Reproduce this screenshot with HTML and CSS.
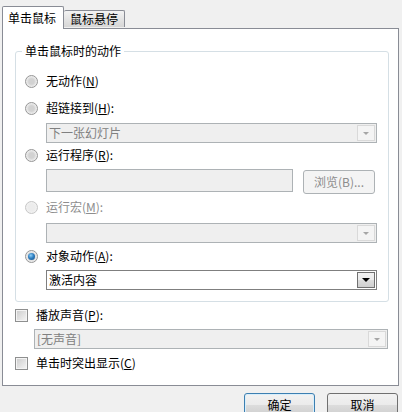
FILE: index.html
```html
<!DOCTYPE html>
<html lang="zh-CN">
<head>
<meta charset="utf-8">
<title>动作设置</title>
<link rel="stylesheet" href="styles.css">
</head>
<body>
<div class="dialog">
  <div class="tabs">
    <div class="tab tab-active">单击鼠标</div>
    <div class="tab">鼠标悬停</div>
  </div>
  <div class="panel">
    <div class="group">
      <div class="group-title"><span>单击鼠标时的动作</span></div>
      <div class="row row-1"><span class="radio"></span><span class="label">无动作(<u>N</u>)</span></div>
      <div class="row row-2"><span class="radio"></span><span class="label">超链接到(<u>H</u>):</span></div>
      <div class="combo combo-disabled combo-1"><span class="combo-text">下一张幻灯片</span><span class="combo-btn"><span class="arrow"></span></span></div>
      <div class="row row-3"><span class="radio"></span><span class="label">运行程序(<u>R</u>):</span></div>
      <div class="input-row">
        <div class="text-input"></div>
        <div class="browse">浏览(B)...</div>
      </div>
      <div class="row row-4 disabled"><span class="radio radio-disabled"></span><span class="label">运行宏(<u>M</u>):</span></div>
      <div class="combo combo-disabled combo-2"><span class="combo-text"></span><span class="combo-btn"><span class="arrow"></span></span></div>
      <div class="row row-5"><span class="radio radio-checked"></span><span class="label">对象动作(<u>A</u>):</span></div>
      <div class="combo combo-enabled combo-3"><span class="combo-text">激活内容</span><span class="combo-btn"><span class="arrow"></span></span></div>
    </div>
    <div class="row check-row-1"><span class="check"></span><span class="label">播放声音(<u>P</u>):</span></div>
    <div class="combo combo-disabled combo-sound"><span class="combo-text">[无声音]</span><span class="combo-btn"><span class="arrow"></span></span></div>
    <div class="row check-row-2"><span class="check"></span><span class="label">单击时突出显示(<u>C</u>)</span></div>
  </div>
  <div class="buttons">
    <div class="btn btn-default">确定</div>
    <div class="btn">取消</div>
  </div>
</div>
</body>
</html>
```

FILE: styles.css
```css
* { box-sizing: border-box; }
html, body { margin: 0; padding: 0; }
body {
  background: #f0f0f0;
  font-family: "Noto Sans CJK SC", "Noto Sans", sans-serif;
  font-size: 12px;
  color: #000;
  width: 402px;
  height: 412px;
  overflow: hidden;
}
u { text-decoration: underline; text-underline-offset: 1px; }

.tabs {
  display: flex;
  align-items: flex-end;
  padding: 5px 0 0 2px;
  height: 28px;
}
.tab {
  height: 16px;
  margin-bottom: 1px;
  padding: 0 6px;
  line-height: 15px;
  border: 1px solid #898c95;
  border-bottom: none;
  border-left: none;
  border-radius: 2px 2px 0 0;
  background: linear-gradient(#f3f3f3, #e4e4e4 50%, #d6d6d6);
  width: 61px;
  height: 17px;
}
.tab-active {
  height: 23px;
  margin-bottom: -1px;
  width: 62px;
  border-left: 1px solid #898c95;
  background: #fff;
  line-height: 22px;
  padding: 0 5px;
  position: relative;
  z-index: 2;
}

.panel {
  margin: 0 3px 0 2px;
  height: 358px;
  border: 1px solid #898c95;
  background: #fff;
  padding: 0 0 0 12px;
  display: flex;
  flex-direction: column;
}

.group {
  margin-top: 22px;
  width: 374px;
  height: 251px;
  border: 1px solid #d5dfe5;
  border-radius: 3px;
  padding: 0 0 0 9px;
  display: flex;
  flex-direction: column;
}
.group-title {
  margin: -9px 0 0 -3px;
  height: 16px;
  line-height: 16px;
}
.group-title span {
  background: #fff;
  padding: 0 3px 0 3px;
}

.row {
  display: flex;
  align-items: center;
  height: 20px;
}
.label { line-height: 20px; }
.disabled .label { color: #8d8d8d; }

.radio {
  width: 13px;
  height: 13px;
  border-radius: 50%;
  border: 1px solid #969696;
  background: radial-gradient(circle at 50% 50%, #d2d2d2 0 35%, #e8e8e8 60%, #fbfbfb 100%);
  margin-right: 8px;
  flex: none;
  position: relative;
}
.radio-disabled {
  border-color: #c6c6c6;
  background: radial-gradient(circle, #ececec 0 40%, #f6f6f6 100%);
}
.radio-checked::after {
  content: "";
  position: absolute;
  left: 2px;
  top: 2px;
  width: 7px;
  height: 7px;
  border-radius: 50%;
  background: radial-gradient(circle at 40% 35%, #8fd0f8 0, #2f7fc1 45%, #184f86 100%);
}

.row-1 { margin-top: 12px; }
.row-2 { margin-top: 7px; }
.combo-1 { margin-top: 5px; }
.row-3 { margin-top: 2px; }
.input-row { margin-top: 4px; display: flex; margin-left: 21px; }
.row-4 { margin-top: 3px; }
.combo-2 { margin-top: 6px; }
.row-5 { margin-top: 3px; }
.combo-3 { margin-top: 4px; }

.combo {
  width: 331px;
  height: 20px;
  margin-left: 21px;
  border: 1px solid #abadb3;
  display: flex;
  align-items: stretch;
  flex: none;
}
.combo-text {
  flex: 1;
  padding-left: 2px;
  line-height: 18px;
}
.combo-disabled {
  background: #efefef;
  border-color: #adb2b5;
}
.combo-disabled .combo-text { color: #808080; }
.combo-enabled {
  background: #fff;
  border-color: #7f7f7f;
}
.combo-btn {
  width: 19px;
  display: flex;
  align-items: center;
  justify-content: center;
  border-left: 1px solid #d0d0d0;
  background: #f4f4f4;
}
.combo-disabled .combo-btn {
  border: 1px solid #d9d9d9;
  margin: 1px 1px 1px 0;
  width: 18px;
  background: #f4f4f4;
}
.arrow {
  width: 0;
  height: 0;
  border-left: 3px solid transparent;
  border-right: 3px solid transparent;
  border-top: 3px solid #a6a6a6;
}
.combo-enabled .combo-btn {
  border: 1px solid #707070;
  margin: 1px 1px 1px 0;
  width: 18px;
  background: linear-gradient(#f2f2f2, #ebebeb 50%, #dddddd 50%, #cfcfcf);
}
.combo-enabled .arrow { border-top-color: #000; border-left-width: 4px; border-right-width: 4px; border-top-width: 4px; }

.text-input {
  width: 247px;
  height: 23px;
  border: 1px solid #adb2b5;
  background: #efefef;
}
.browse {
  margin: 1px 0 0 10px;
  width: 72px;
  height: 24px;
  border: 1px solid #adb2b5;
  border-radius: 3px;
  background: #f4f4f4;
  color: #8d8d8d;
  text-align: center;
  line-height: 22px;
}

.check {
  width: 13px;
  height: 13px;
  border: 1px solid #8e8f8f;
  background: linear-gradient(135deg, #cbcbcb, #f6f6f6);
  box-shadow: inset 0 0 0 1px #f4f4f4;
  margin-right: 8px;
  flex: none;
}
.check-row-1 { margin-top: 3px; }
.combo-sound { margin: 4px 0 0 19px; width: 354px; }
.check-row-2 { margin-top: 4px; }

.buttons {
  display: flex;
  justify-content: flex-end;
  gap: 12px;
  padding: 7px 4px 0 0;
}
.btn {
  width: 71px;
  height: 23px;
  border: 1px solid #707070;
  border-radius: 3px;
  background: linear-gradient(#f2f2f2, #ebebeb 50%, #dddddd 50%, #cfcfcf);
  text-align: center;
  line-height: 21px;
}
.btn-default {
  border-color: #3c7fb1;
  box-shadow: inset 0 0 0 1px #d8eefb;
  background: linear-gradient(#eaf6fd, #d9f0fc 50%, #bee6fd 50%, #a7d9f5);
  background: linear-gradient(#f2f2f2, #ebebeb 50%, #dddddd 50%, #cfcfcf);
}
```
